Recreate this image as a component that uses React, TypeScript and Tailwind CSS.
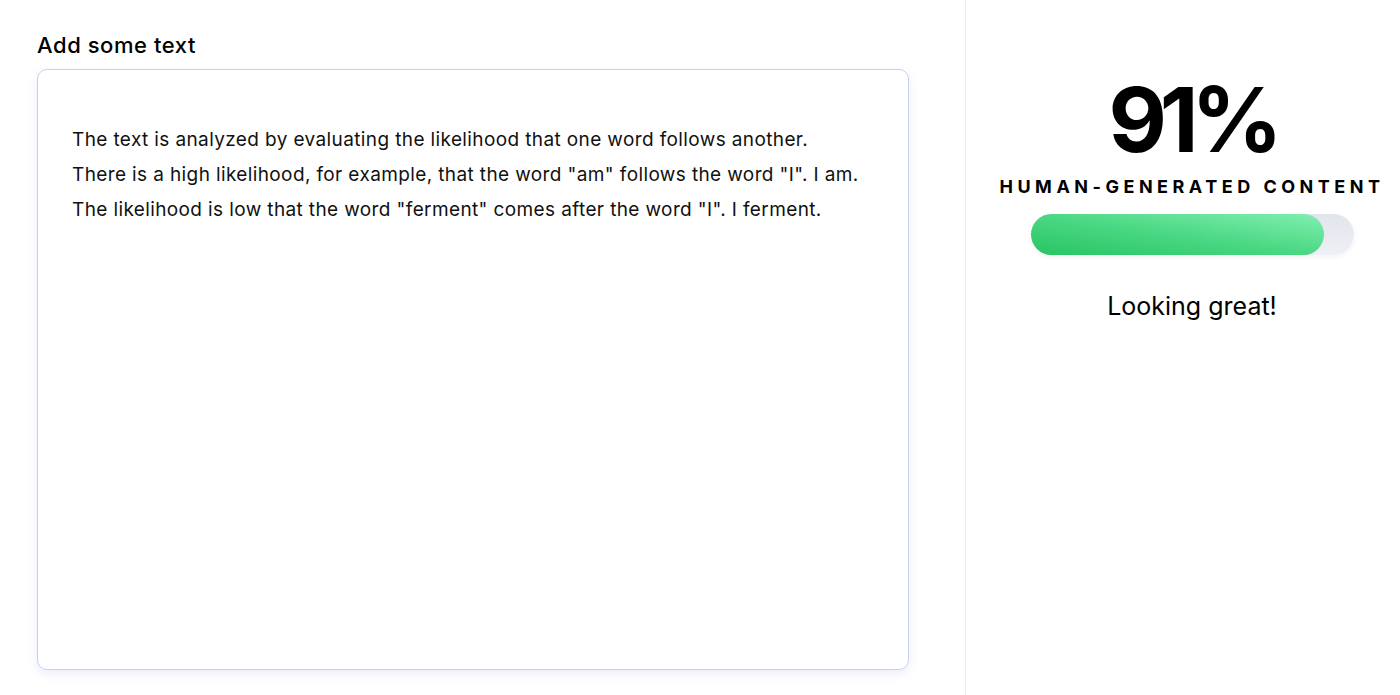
import React from "react";

const sample = [
  "The text is analyzed by evaluating the likelihood that one word follows another.",
  'There is a high likelihood, for example, that the word "am" follows the word "I". I am.',
  'The likelihood is low that the word "ferment" comes after the word "I". I ferment.',
];

export default function App() {
  const score = 91;

  return (
    <main className="flex h-[695px] w-full overflow-hidden bg-white font-['Inter',sans-serif] text-black">
      {/* editor */}
      <section className="w-[965px] shrink-0 pl-[37px] pt-[30px]">
        <h2 className="text-[22px] font-medium leading-[30px] tracking-[0.025em]">Add some text</h2>
        <div className="mt-[9px] h-[601px] w-[872px] rounded-[10px] border border-[#c9cff0] bg-white px-[34px] pt-[52px] shadow-[0_4px_10px_rgba(180,186,240,0.25)]">
          {sample.map((line) => (
            <p key={line} className="text-[19px] leading-[35px] tracking-[0.02em] text-[#111]">
              {line}
            </p>
          ))}
        </div>
      </section>

      {/* score */}
      <aside className="flex flex-1 flex-col items-center border-l border-[#ececec] bg-white pl-[18px] pt-[75px]">
        <div className="text-[90px] font-bold leading-[90px] tracking-[-0.08em]">{score}%</div>
        <div className="mt-[10px] whitespace-nowrap text-[18px] font-bold leading-[24px] tracking-[0.25em]">
          HUMAN-GENERATED CONTENT
        </div>
        <div className="mt-[15px] h-[41px] w-[323px] rounded-full bg-gradient-to-b from-[#e3e5ec] to-[#eef0f5] shadow-[0_2px_6px_rgba(0,0,0,0.05)]">
          <div
            className="h-full rounded-full bg-gradient-to-tr from-[#26c462] via-[#4ad884] to-[#80efb0]"
            style={{ width: `${score}%` }}
          />
        </div>
        <p className="mt-[35px] text-[25px] leading-[32px]">Looking great!</p>
      </aside>
    </main>
  );
}
